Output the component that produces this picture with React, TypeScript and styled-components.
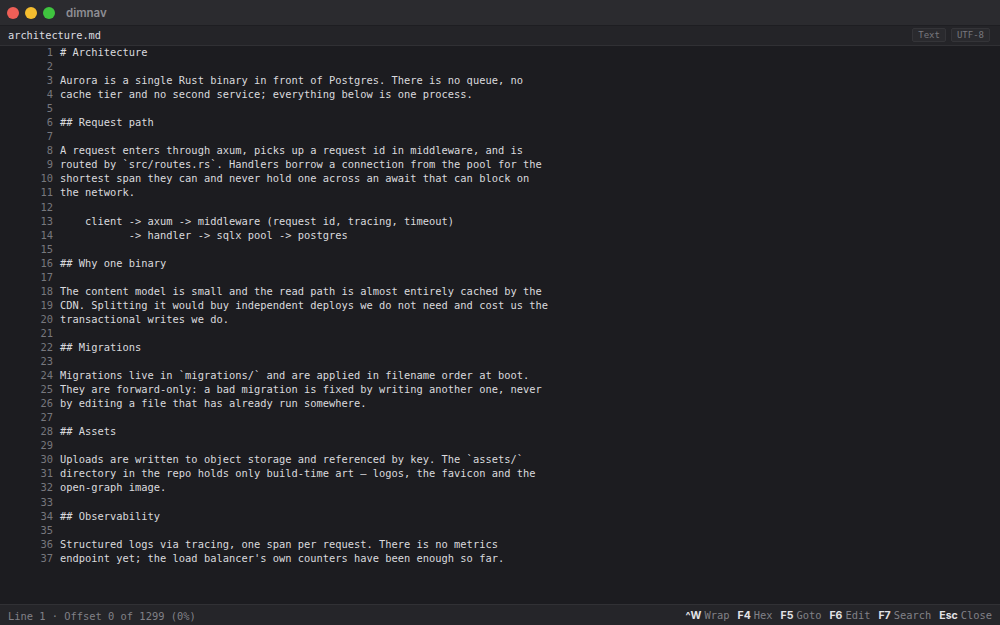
import React from "react";
import styled, { createGlobalStyle } from "styled-components";

const Global = createGlobalStyle`
  html, body { margin: 0; padding: 0; background: #1c1c20; }
  #root { height: 625px; }
`;

const mono = `"DejaVu Sans Mono", "Liberation Mono", monospace`;

const Window = styled.div`
  width: 1000px;
  height: 625px;
  display: flex;
  flex-direction: column;
  background: #1c1c20;
  overflow: hidden;
`;

const TitleBar = styled.div`
  height: 25px;
  flex: none;
  display: flex;
  align-items: center;
  padding-left: 7px;
  gap: 6px;
  background: #2b2b2f;
`;

const Dot = styled.span<{ $c: string }>`
  width: 12px;
  height: 12px;
  border-radius: 50%;
  background: ${(p) => p.$c};
`;

const AppName = styled.span`
  margin-left: 5px;
  font-family: Inter, "Noto Sans", sans-serif;
  font-size: 11.5px;
  font-weight: 600;
  color: #8e8e94;
`;

const TabBar = styled.div`
  height: 18px;
  flex: none;
  display: flex;
  align-items: center;
  justify-content: space-between;
  padding: 0 8px 1px;
  background: #242428;
  border-top: 1px solid #1e1e22;
  border-bottom: 1px solid #303034;
`;

const FileName = styled.span`
  font-family: ${mono};
  font-size: 10.3px;
  color: #dcdce0;
`;

const Badges = styled.div`
  display: flex;
  gap: 5px;
  margin-right: 2px;
`;

const Badge = styled.span`
  font-family: ${mono};
  font-size: 9px;
  color: #77777d;
  background: #2a2a2e;
  border: 1px solid #343438;
  border-radius: 2px;
  padding: 0 5px;
  line-height: 12px;
`;

const Editor = styled.div`
  flex: 1;
  overflow: hidden;
`;

const Lines = styled.div`
  margin-top: -1px;
  font-family: ${mono};
  font-size: 10.4px;
  line-height: 14.06px;
`;

const Row = styled.div`
  display: flex;
  height: 14.06px;
`;

const Num = styled.span`
  width: 53px;
  flex: none;
  text-align: right;
  color: #77777d;
`;

const Code = styled.span`
  margin-left: 7px;
  color: #dadade;
  white-space: pre;
`;

const StatusBar = styled.div`
  height: 19px;
  flex: none;
  display: flex;
  align-items: center;
  justify-content: space-between;
  padding: 1px 8px 0;
  background: #252529;
  border-top: 1px solid #313135;
  font-family: ${mono};
  font-size: 10.4px;
`;

const StatusText = styled.span`
  color: #818187;
`;

const Keys = styled.div`
  display: flex;
  gap: 8px;
`;

const KeyItem = styled.span`
  display: flex;
  align-items: baseline;
  gap: 3px;
`;

const Key = styled.span`
  color: #e2e2e6;
  font-weight: bold;
  font-family: Inter, "Noto Sans", sans-serif;
  font-size: 10.5px;
`;

const Label = styled.span`
  color: #818187;
`;

const text = `# Architecture

Aurora is a single Rust binary in front of Postgres. There is no queue, no
cache tier and no second service; everything below is one process.

## Request path

A request enters through axum, picks up a request id in middleware, and is
routed by \`src/routes.rs\`. Handlers borrow a connection from the pool for the
shortest span they can and never hold one across an await that can block on
the network.

    client -> axum -> middleware (request id, tracing, timeout)
           -> handler -> sqlx pool -> postgres

## Why one binary

The content model is small and the read path is almost entirely cached by the
CDN. Splitting it would buy independent deploys we do not need and cost us the
transactional writes we do.

## Migrations

Migrations live in \`migrations/\` and are applied in filename order at boot.
They are forward-only: a bad migration is fixed by writing another one, never
by editing a file that has already run somewhere.

## Assets

Uploads are written to object storage and referenced by key. The \`assets/\`
directory in the repo holds only build-time art — logos, the favicon and the
open-graph image.

## Observability

Structured logs via tracing, one span per request. There is no metrics
endpoint yet; the load balancer's own counters have been enough so far.`;

const keys: [string, string][] = [
  ["^W", "Wrap"],
  ["F4", "Hex"],
  ["F5", "Goto"],
  ["F6", "Edit"],
  ["F7", "Search"],
  ["Esc", "Close"],
];

export default function App() {
  const lines = text.split("\n");
  return (
    <>
      <Global />
      <Window>
        <TitleBar>
          <Dot $c="#ee5f57" />
          <Dot $c="#f4bd2f" />
          <Dot $c="#3fc43f" />
          <AppName>dimnav</AppName>
        </TitleBar>
        <TabBar>
          <FileName>architecture.md</FileName>
          <Badges>
            <Badge>Text</Badge>
            <Badge>UTF-8</Badge>
          </Badges>
        </TabBar>
        <Editor>
          <Lines>
            {lines.map((l, i) => (
              <Row key={i}>
                <Num>{i + 1}</Num>
                <Code>{l}</Code>
              </Row>
            ))}
          </Lines>
        </Editor>
        <StatusBar>
          <StatusText>Line 1 · Offset 0 of 1299 (0%)</StatusText>
          <Keys>
            {keys.map(([k, l]) => (
              <KeyItem key={k}>
                <Key>{k}</Key>
                <Label>{l}</Label>
              </KeyItem>
            ))}
          </Keys>
        </StatusBar>
      </Window>
    </>
  );
}
